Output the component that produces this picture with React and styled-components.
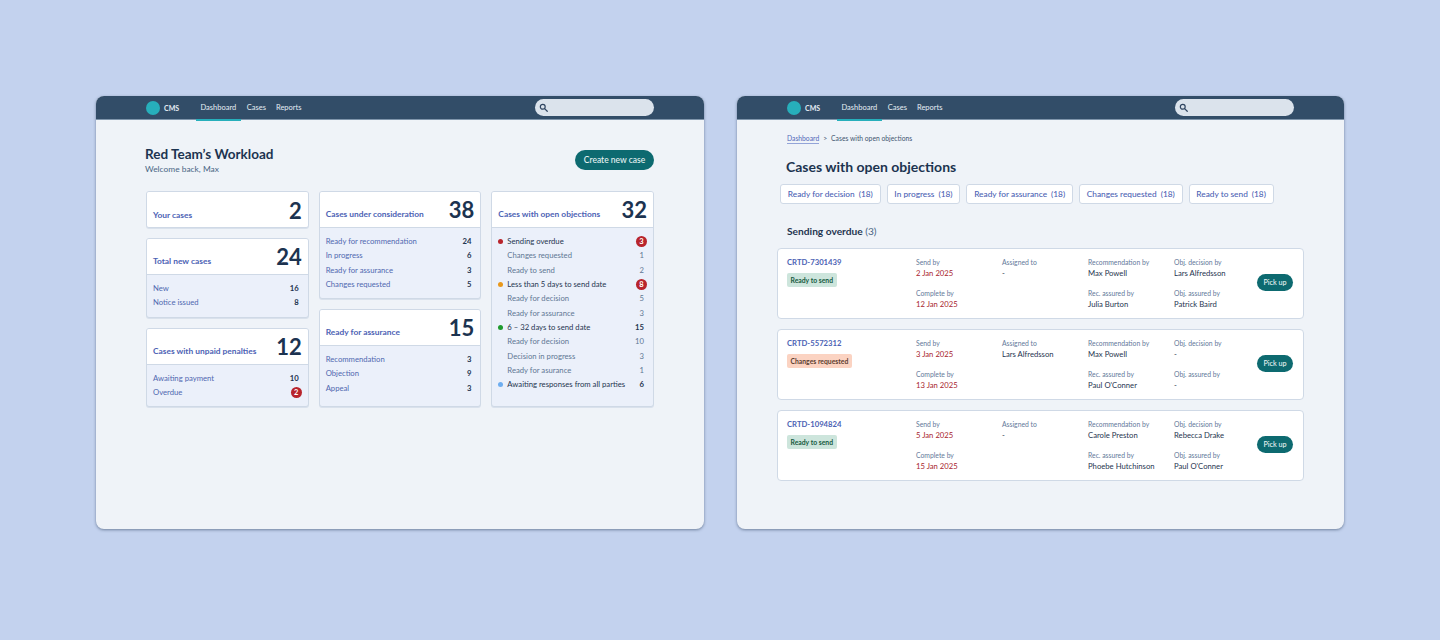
import styled, { createGlobalStyle } from 'styled-components'

const GlobalStyle = createGlobalStyle`
    html, body { margin: 0; padding: 0; background: #c3d2ee; }
    body { font-family: Lato, "Open Sans", sans-serif; -webkit-font-smoothing: antialiased; }
    * { box-sizing: border-box; }
`

const Stage = styled.div`
    width: 1440px;
    height: 640px;
    padding: 96px 96px 0 96px;
    display: flex;
    gap: 33px;
    align-items: flex-start;
    overflow: hidden;
`
const Window = styled.div`
    width: ${p => p.$w}px;
    height: 433px;
    background: #eff3f8;
    border-radius: 8px;
    overflow: hidden;
    box-shadow: 0 1px 3px rgba(40, 60, 90, 0.55);
    display: flex;
    flex-direction: column;
`
const Header = styled.header`
    height: 24px;
    flex: none;
    background: #324d68;
    display: flex;
    align-items: center;
    padding-left: 50px;
    padding-right: 50px;
    border-bottom: 1px solid #7f95ab;
`
const Logo = styled.div`
    display: flex;
    align-items: center;
    gap: 4px;
    width: 50px;
    color: #e6edf5;
    font-size: 7px;
    font-weight: 700;
`
const LogoDot = styled.span`
    width: 14px;
    height: 14px;
    border-radius: 50%;
    background: #27afbb;
`
const Nav = styled.nav`
    display: flex;
    height: 24px;
    flex: 1;
`
const NavItem = styled.a`
    display: flex;
    align-items: center;
    padding: 1px ${p => (p.$active ? '4.5px' : '5px')} 0;
    font-size: 7.5px;
    color: #e6edf5;
    border-bottom: 2px solid ${p => (p.$active ? '#27afbb' : 'transparent')};
    margin-bottom: -1px;
    margin-right: ${p => (p.$active ? '1px' : '0')};
`
const Search = styled.div`
    width: 119px;
    height: 17px;
    border-radius: 9px;
    background: #dbe3ec;
    display: flex;
    align-items: center;
    padding-left: 4px;
`
const Main = styled.main`
    flex: 1;
    padding: 27px 50px 0 49px;
`
const TopRow = styled.div`
    display: flex;
    justify-content: space-between;
    align-items: flex-start;
    margin-bottom: 12px;
    height: 32px;
`
const Title = styled.h1`
    margin: 0;
    font-size: 13.5px;
    line-height: 14px;
    font-weight: 700;
    color: #1c3350;
`
const Welcome = styled.div`
    margin-top: 3px;
    font-size: 8.4px;
    line-height: 11px;
    color: #4a6685;
`
const PrimaryButton = styled.button`
    border: none;
    background: #0d6a70;
    color: #e8f3f3;
    border-radius: 11px;
    width: 79px;
    height: 20px;
    margin-top: 3px;
    padding: 0;
    font-family: inherit;
    font-size: 8.5px;
    font-weight: 500;
`
const Columns = styled.div`
    display: flex;
    gap: 10px;
    padding-left: 1px;
`
const Column = styled.div`
    width: ${p => p.$w}px;
    display: flex;
    flex-direction: column;
    gap: 10px;
`
const Card = styled.section`
    border: 1px solid #cfd9e6;
    border-radius: 3px;
    background: #ebf0fa;
    height: ${p => p.$h}px;
    overflow: hidden;
    box-shadow: 0 1px 0 #d9e1ec;
`
const CardHead = styled.div`
    height: 36px;
    background: #fff;
    display: flex;
    align-items: flex-end;
    justify-content: space-between;
    padding: 0 6px 7px 6px;
    border-bottom: ${p => (p.$only ? 'none' : '1px solid #cfd9e6')};
`
const CardTitle = styled.span`
    font-size: 8.4px;
    line-height: 11px;
    font-weight: 700;
    color: #4c62b4;
`
const CardTotal = styled.span`
    font-size: 22px;
    line-height: 22px;
    font-weight: 700;
    color: #1c3350;
    margin-bottom: -1px;
`
const CardBody = styled.div`
    padding: 6px 9px 0 6px;
`
const Row = styled.div`
    height: 14.33px;
    display: flex;
    align-items: center;
    justify-content: space-between;
    font-size: 7.7px;
    padding-left: ${p => (p.$indent ? '9px' : '0')};
    color: ${p => (p.$plain ? '#5f7794' : '#5068b0')};
`
const RowLabel = styled.span`
    display: flex;
    align-items: center;
    color: ${p => (p.$strong ? '#1f3550' : 'inherit')};
`
const Dot = styled.span`
    width: 5px;
    height: 5px;
    border-radius: 50%;
    margin-right: 4px;
    margin-left: 0;
    background: ${p => p.$c};
`
const RowValue = styled.span`
    color: ${p => (p.$plain ? '#5f7794' : '#1f3550')};
    font-weight: ${p => (p.$plain ? 400 : 700)};
`
const Alert = styled.span`
    width: 11px;
    height: 11px;
    border-radius: 50%;
    background: #b8242c;
    color: #fff;
    font-size: 7.5px;
    font-weight: 700;
    display: flex;
    align-items: center;
    justify-content: center;
    margin-right: -3px;
`

const Crumbs = styled.div`
    display: flex;
    gap: 4px;
    font-size: 6.75px;
    line-height: 9px;
    color: #3f5570;
    padding-left: 50px;
    margin-top: 14px;
`
const CrumbLink = styled.a`
    color: #5068b8;
    border-bottom: 1px solid #93a4d8;
`
const DetailMain = styled.main`
    flex: 1;
    padding: 0;
`
const DetailTitle = styled.h1`
    margin: 14px 0 8px 49px;
    font-size: 14px;
    line-height: 18px;
    font-weight: 700;
    color: #1c3350;
`
const Filters = styled.div`
    display: flex;
    gap: 6px;
    padding-left: 43px;
`
const Filter = styled.button`
    height: 20px;
    padding: 0 6.8px;
    background: #fff;
    border: 1px solid #cfd9e6;
    border-radius: 3px;
    color: #4c62b4;
    font-family: inherit;
    font-size: 8.3px;
    font-weight: 500;
    display: flex;
    align-items: center;
    gap: 4px;
`
const Section = styled.h2`
    margin: 21px 0 10px 50px;
    font-size: 10.2px;
    line-height: 13px;
    font-weight: 700;
    color: #1f3550;
`
const SectionCount = styled.span`
    font-weight: 400;
    color: #4a6685;
`
const CaseList = styled.div`
    display: flex;
    flex-direction: column;
    gap: 10px;
    margin-left: 40px;
    width: 527px;
`
const CaseCard = styled.article`
    height: 71px;
    background: #fff;
    border: 1px solid #cfd9e6;
    border-radius: 4px;
    display: grid;
    grid-template-columns: 129px 86px 86px 86px 83px 1fr;
    padding: 7.5px 10px 0 9px;
`
const CaseInfo = styled.div`
    display: flex;
    flex-direction: column;
    align-items: flex-start;
`
const CaseId = styled.a`
    font-size: 7.7px;
    line-height: 11px;
    font-weight: 700;
    color: #4c62b4;
`
const Tag = styled.span`
    margin-top: 5.5px;
    height: 14px;
    padding: 0 3.5px;
    border-radius: 2px;
    font-size: 6.8px;
    font-weight: 700;
    display: flex;
    align-items: center;
    background: ${p => (p.$tone === 'green' ? '#cde5dc' : '#fbd3c2')};
    color: ${p => (p.$tone === 'green' ? '#16593f' : '#5d3d30')};
`
const Field = styled.div`
    height: 31.3px;
`
const FieldLabel = styled.div`
    font-size: 6.8px;
    line-height: 10px;
    color: #64799a;
`
const FieldValue = styled.div`
    margin-top: 1px;
    font-size: 7.7px;
    line-height: 11px;
    color: ${p => (p.$late ? '#a8242c' : '#1f3550')};
`
const PickUp = styled.button`
    align-self: center;
    justify-self: end;
    width: 36px;
    height: 17px;
    margin-top: -11px;
    padding: 0;
    border: none;
    border-radius: 9px;
    background: #0d6a70;
    color: #e8f3f3;
    font-family: inherit;
    font-size: 7.2px;
    font-weight: 500;
`

const SearchIcon = () => (
    <svg width="9" height="9" viewBox="0 0 24 24" fill="none" stroke="#2f4560" strokeWidth="3.2" strokeLinecap="round">
        <circle cx="10" cy="10" r="6.5" />
        <path d="M15 15l7 7" />
    </svg>
)

const TopBar = () => (
    <Header>
        <Logo><LogoDot />CMS</Logo>
        <Nav>
            <NavItem $active>Dashboard</NavItem>
            <NavItem>Cases</NavItem>
            <NavItem>Reports</NavItem>
        </Nav>
        <Search><SearchIcon /></Search>
    </Header>
)

const SummaryCard = ({ title, total, h, rows }) => (
    <Card $h={h}>
        <CardHead $only={!rows}>
            <CardTitle>{title}</CardTitle>
            <CardTotal>{total}</CardTotal>
        </CardHead>
        {rows && (
            <CardBody>
                {rows.map(([label, value, alert]) => (
                    <Row key={label}>
                        <RowLabel>{label}</RowLabel>
                        {alert ? <Alert>{value}</Alert> : <RowValue>{value}</RowValue>}
                    </Row>
                ))}
            </CardBody>
        )}
    </Card>
)

const objections = [
    { label: 'Sending overdue', value: 3, dot: '#b8242c', alert: true },
    { label: 'Changes requested', value: 1 },
    { label: 'Ready to send', value: 2 },
    { label: 'Less than 5 days to send date', value: 8, dot: '#e8981c', alert: true },
    { label: 'Ready for decision', value: 5 },
    { label: 'Ready for assurance', value: 3 },
    { label: '6 – 32 days to send date', value: 15, dot: '#1f9a2e' },
    { label: 'Ready for decision', value: 10 },
    { label: 'Decision in progress', value: 3 },
    { label: 'Ready for asurance', value: 1 },
    { label: 'Awaiting responses from all parties', value: 6, dot: '#6eaef0' },
]

const cases = [
    { id: 'CRTD-7301439', tag: 'Ready to send', tone: 'green', send: '2 Jan 2025', complete: '12 Jan 2025', assigned: '-', rec: 'Max Powell', recBy: 'Julia Burton', obj: 'Lars Alfredsson', objBy: 'Patrick Baird' },
    { id: 'CRTD-5572312', tag: 'Changes requested', tone: 'orange', send: '3 Jan 2025', complete: '13 Jan 2025', assigned: 'Lars Alfredsson', rec: 'Max Powell', recBy: "Paul O'Conner", obj: '-', objBy: '-' },
    { id: 'CRTD-1094824', tag: 'Ready to send', tone: 'green', send: '5 Jan 2025', complete: '15 Jan 2025', assigned: '-', rec: 'Carole Preston', recBy: 'Phoebe Hutchinson', obj: 'Rebecca Drake', objBy: "Paul O'Conner" },
]

const filters = ['Ready for decision', 'In progress', 'Ready for assurance', 'Changes requested', 'Ready to send']

export default function App() {
    return (
        <Stage>
            <GlobalStyle />
            <Window $w={608}>
                <TopBar />
                <Main>
                    <TopRow>
                        <div>
                            <Title>Red Team’s Workload</Title>
                            <Welcome>Welcome back, Max</Welcome>
                        </div>
                        <PrimaryButton>Create new case</PrimaryButton>
                    </TopRow>
                    <Columns>
                        <Column $w={163}>
                            <SummaryCard title="Your cases" total="2" h={37} />
                            <SummaryCard title="Total new cases" total="24" h={80} rows={[['New', 16], ['Notice issued', 8]]} />
                            <SummaryCard title="Cases with unpaid penalties" total="12" h={79} rows={[['Awaiting payment', 10], ['Overdue', 2, true]]} />
                        </Column>
                        <Column $w={163}>
                            <SummaryCard title="Cases under consideration" total="38" h={108} rows={[['Ready for recommendation', 24], ['In progress', 6], ['Ready for assurance', 3], ['Changes requested', 5]]} />
                            <SummaryCard title="Ready for assurance" total="15" h={98} rows={[['Recommendation', 3], ['Objection', 9], ['Appeal', 3]]} />
                        </Column>
                        <Column $w={163}>
                            <Card $h={216}>
                                <CardHead>
                                    <CardTitle>Cases with open objections</CardTitle>
                                    <CardTotal>32</CardTotal>
                                </CardHead>
                                <CardBody>
                                    {objections.map(o => (
                                        <Row key={o.label + o.value} $plain $indent={!o.dot}>
                                            <RowLabel $strong={!!o.dot}>
                                                {o.dot && <Dot $c={o.dot} />}
                                                {o.label}
                                            </RowLabel>
                                            {o.alert ? <Alert>{o.value}</Alert> : <RowValue $plain={!o.dot}>{o.value}</RowValue>}
                                        </Row>
                                    ))}
                                </CardBody>
                            </Card>
                        </Column>
                    </Columns>
                </Main>
            </Window>
            <Window $w={607}>
                <TopBar />
                <DetailMain>
                    <Crumbs>
                        <CrumbLink>Dashboard</CrumbLink>
                        <span>&gt;</span>
                        <span>Cases with open objections</span>
                    </Crumbs>
                    <DetailTitle>Cases with open objections</DetailTitle>
                    <Filters>
                        {filters.map(f => (
                            <Filter key={f}><span>{f}</span><span>(18)</span></Filter>
                        ))}
                    </Filters>
                    <Section>Sending overdue <SectionCount>(3)</SectionCount></Section>
                    <CaseList>
                        {cases.map(c => (
                            <CaseCard key={c.id}>
                                <CaseInfo>
                                    <CaseId>{c.id}</CaseId>
                                    <Tag $tone={c.tone}>{c.tag}</Tag>
                                </CaseInfo>
                                <div>
                                    <Field><FieldLabel>Send by</FieldLabel><FieldValue $late>{c.send}</FieldValue></Field>
                                    <Field><FieldLabel>Complete by</FieldLabel><FieldValue $late>{c.complete}</FieldValue></Field>
                                </div>
                                <div>
                                    <Field><FieldLabel>Assigned to</FieldLabel><FieldValue>{c.assigned}</FieldValue></Field>
                                </div>
                                <div>
                                    <Field><FieldLabel>Recommendation by</FieldLabel><FieldValue>{c.rec}</FieldValue></Field>
                                    <Field><FieldLabel>Rec. assured by</FieldLabel><FieldValue>{c.recBy}</FieldValue></Field>
                                </div>
                                <div>
                                    <Field><FieldLabel>Obj. decision by</FieldLabel><FieldValue>{c.obj}</FieldValue></Field>
                                    <Field><FieldLabel>Obj. assured by</FieldLabel><FieldValue>{c.objBy}</FieldValue></Field>
                                </div>
                                <PickUp>Pick up</PickUp>
                            </CaseCard>
                        ))}
                    </CaseList>
                </DetailMain>
            </Window>
        </Stage>
    )
}
